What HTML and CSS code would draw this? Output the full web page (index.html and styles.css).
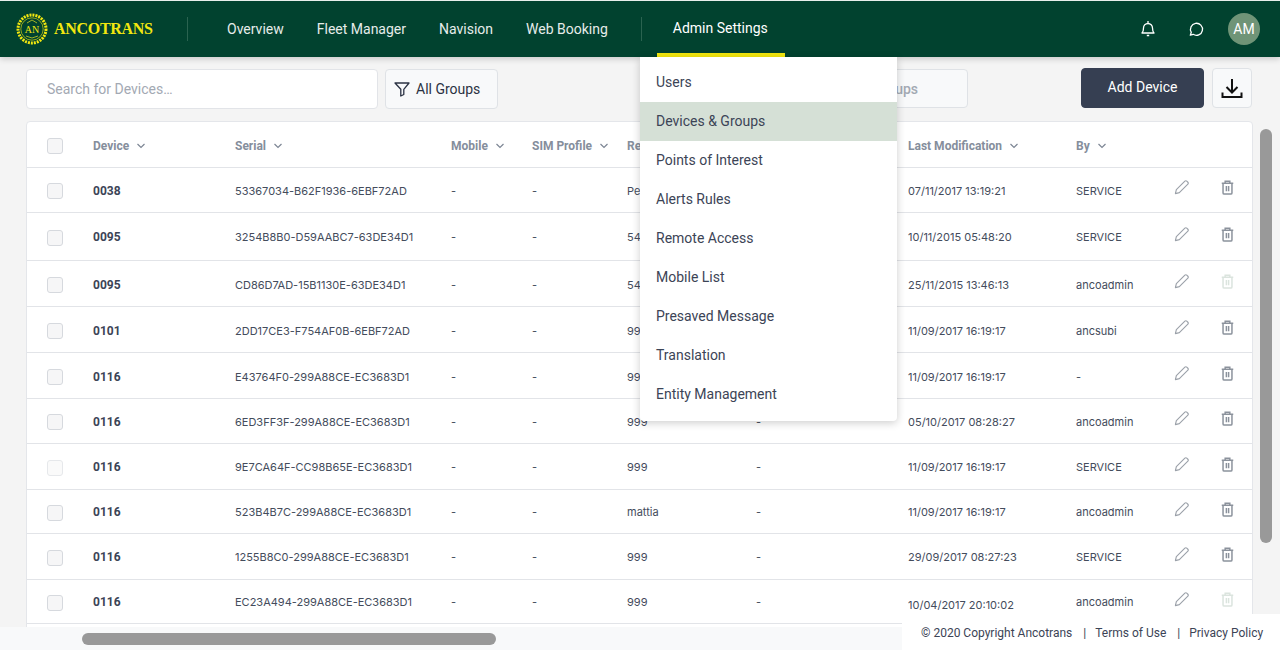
FILE: index.html
```html
<!DOCTYPE html>
<html lang="en">
<head>
  <meta charset="UTF-8">
  <meta name="viewport" content="width=device-width, initial-scale=1">
  <title>Ancotrans</title>
  <link rel="stylesheet" href="styles.css">
</head>
<body>
  <svg class="icon-defs" width="0" height="0">
    <symbol id="chevron" viewBox="0 0 10 6"><path d="M1.500 1l3.500 3.500L8.500 1" fill="none" stroke="currentColor" stroke-width="1.200"/></symbol>
    <symbol id="pencil" viewBox="0 0 16 16"><path d="M1.500 14.500l1-4.200L11.600 1.200a1.400 1.400 0 0 1 2 0l1.200 1.200a1.400 1.400 0 0 1 0 2L5.700 13.500z" fill="none" stroke="currentColor" stroke-width="1.200" stroke-linejoin="round"/></symbol>
    <symbol id="trash" viewBox="0 0 14 16"><path d="M.8 3.500h12.400M4.500 3.300V1.200h5v2.100M2.200 3.500v10.300a1.300 1.300 0 0 0 1.300 1.300h7a1.300 1.300 0 0 0 1.300-1.300V3.500M5.800 6.500v5.500M8.200 6.500v5.500" fill="none" stroke="currentColor" stroke-width="1.600"/></symbol>
  </svg>

  <!-- top bar -->
  <header class="topbar">
    <a class="brand">
      <svg class="brand-mark" viewBox="0 0 32 32" width="32" height="32">
        <circle cx="16" cy="16" r="14" fill="none" stroke="#f2e70f" stroke-width="3" stroke-dasharray="2 1"/>
        <circle cx="16" cy="16" r="11.200" fill="none" stroke="#f2e70f" stroke-width=".6"/>
        <path d="M11 10l5-3 5 3M10 23l6 2 6-2" fill="none" stroke="#c9cf25" stroke-width=".8"/>
        <text x="16" y="19.500" text-anchor="middle" class="brand-mark-text">AN</text>
      </svg>
      <span class="brand-name">ANCOTRANS</span>
    </a>
    <span class="nav-sep"></span>
    <nav class="nav">
      <a class="nav-link">Overview</a>
      <a class="nav-link">Fleet Manager</a>
      <a class="nav-link">Navision</a>
      <a class="nav-link">Web Booking</a>
    </nav>
    <span class="nav-sep nav-sep-2"></span>
    <a class="nav-link nav-link-active">Admin Settings</a>
    <div class="topbar-right">
      <svg class="top-icon" viewBox="0 0 16 18" width="16" height="18"><path d="M2 13c1.200-1.200 1.500-2.500 1.500-5a4.500 4.500 0 0 1 9 0c0 2.500.3 3.800 1.500 5zM8 1v2M6.800 15.500h2.400" fill="none" stroke="#fff" stroke-width="1.300" stroke-linejoin="round"/></svg>
      <svg class="top-icon" viewBox="0 0 16 16" width="16" height="16"><path d="M2.300 14.200l1-2.900A6 6 0 1 1 5.200 13.300z" fill="none" stroke="#fff" stroke-width="1.300" stroke-linejoin="round"/></svg>
      <span class="avatar">AM</span>
    </div>
  </header>

  <main class="content">
    <div class="toolbar">
      <input class="search" type="text" placeholder="Search for Devices…">
      <button class="btn btn-filter">
        <svg viewBox="0 0 16 16" width="16" height="16"><path d="M1 2h14L9.800 8.300V13.500l-3 1.500V8.300z" fill="none" stroke="#2b3243" stroke-width="1.300" stroke-linejoin="round"/></svg>
        All Groups
      </button>
      <button class="btn btn-ghost">ups</button>
      <button class="btn btn-primary">Add Device</button>
      <button class="btn btn-download">
        <svg viewBox="0 0 22 22" width="22" height="22"><path d="M11 2v13M5.500 10l5.500 5.500 5.500-5.500M1.500 15.500v4.500h19v-4.500" fill="none" stroke="#111" stroke-width="2"/></svg>
      </button>
    </div>

    <div class="table-card">
      <table class="devices">
        <colgroup>
          <col class="c-check"><col class="c-device"><col class="c-serial"><col class="c-mobile"><col class="c-sim">
          <col class="c-reg"><col class="c-note"><col class="c-mod"><col class="c-by"><col class="c-edit"><col class="c-del">
        </colgroup>
        <thead>
          <tr>
            <th><span class="check"></span></th>
            <th>Device <svg class="sort"><use href="#chevron"/></svg></th>
            <th>Serial <svg class="sort"><use href="#chevron"/></svg></th>
            <th>Mobile <svg class="sort"><use href="#chevron"/></svg></th>
            <th>SIM Profile <svg class="sort"><use href="#chevron"/></svg></th>
            <th>Re</th>
            <th></th>
            <th>Last Modification <svg class="sort"><use href="#chevron"/></svg></th>
            <th>By <svg class="sort"><use href="#chevron"/></svg></th>
            <th></th>
            <th></th>
          </tr>
        </thead>
        <tbody>
          <tr class="h45">
            <td><span class="check"></span></td><td class="name">0038</td><td>53367034-B62F1936-6EBF72AD</td><td>-</td><td>-</td><td>Pe</td><td></td><td>07/11/2017 13:19:21</td><td>SERVICE</td>
            <td class="act"><svg class="i-edit"><use href="#pencil"/></svg></td><td class="act"><svg class="i-del"><use href="#trash"/></svg></td>
          </tr>
          <tr class="h48 up">
            <td><span class="check"></span></td><td class="name">0095</td><td>3254B8B0-D59AABC7-63DE34D1</td><td>-</td><td>-</td><td>54</td><td></td><td>10/11/2015 05:48:20</td><td>SERVICE</td>
            <td class="act"><svg class="i-edit"><use href="#pencil"/></svg></td><td class="act"><svg class="i-del"><use href="#trash"/></svg></td>
          </tr>
          <tr class="h46">
            <td><span class="check"></span></td><td class="name">0095</td><td>CD86D7AD-15B1130E-63DE34D1</td><td>-</td><td>-</td><td>54</td><td></td><td>25/11/2015 13:46:13</td><td>ancoadmin</td>
            <td class="act"><svg class="i-edit"><use href="#pencil"/></svg></td><td class="act"><svg class="i-del off"><use href="#trash"/></svg></td>
          </tr>
          <tr class="h46">
            <td><span class="check"></span></td><td class="name">0101</td><td>2DD17CE3-F754AF0B-6EBF72AD</td><td>-</td><td>-</td><td>99</td><td></td><td>11/09/2017 16:19:17</td><td>ancsubi</td>
            <td class="act"><svg class="i-edit"><use href="#pencil"/></svg></td><td class="act"><svg class="i-del"><use href="#trash"/></svg></td>
          </tr>
          <tr class="h46">
            <td><span class="check"></span></td><td class="name">0116</td><td>E43764F0-299A88CE-EC3683D1</td><td>-</td><td>-</td><td>99</td><td></td><td>11/09/2017 16:19:17</td><td>-</td>
            <td class="act"><svg class="i-edit"><use href="#pencil"/></svg></td><td class="act"><svg class="i-del"><use href="#trash"/></svg></td>
          </tr>
          <tr class="h45">
            <td><span class="check"></span></td><td class="name">0116</td><td>6ED3FF3F-299A88CE-EC3683D1</td><td>-</td><td>-</td><td>999</td><td>-</td><td>05/10/2017 08:28:27</td><td>ancoadmin</td>
            <td class="act"><svg class="i-edit"><use href="#pencil"/></svg></td><td class="act"><svg class="i-del"><use href="#trash"/></svg></td>
          </tr>
          <tr class="h46 up">
            <td><span class="check check-light"></span></td><td class="name">0116</td><td>9E7CA64F-CC98B65E-EC3683D1</td><td>-</td><td>-</td><td>999</td><td>-</td><td>11/09/2017 16:19:17</td><td>SERVICE</td>
            <td class="act"><svg class="i-edit"><use href="#pencil"/></svg></td><td class="act"><svg class="i-del"><use href="#trash"/></svg></td>
          </tr>
          <tr class="h44 up">
            <td><span class="check"></span></td><td class="name">0116</td><td>523B4B7C-299A88CE-EC3683D1</td><td>-</td><td>-</td><td>mattia</td><td>-</td><td>11/09/2017 16:19:17</td><td>ancoadmin</td>
            <td class="act"><svg class="i-edit"><use href="#pencil"/></svg></td><td class="act"><svg class="i-del"><use href="#trash"/></svg></td>
          </tr>
          <tr class="h46 up">
            <td><span class="check"></span></td><td class="name">0116</td><td>1255B8C0-299A88CE-EC3683D1</td><td>-</td><td>-</td><td>999</td><td>-</td><td>29/09/2017 08:27:23</td><td>SERVICE</td>
            <td class="act"><svg class="i-edit"><use href="#pencil"/></svg></td><td class="act"><svg class="i-del"><use href="#trash"/></svg></td>
          </tr>
          <tr class="h44 up">
            <td><span class="check"></span></td><td class="name">0116</td><td>EC23A494-299A88CE-EC3683D1</td><td>-</td><td>-</td><td>999</td><td>-</td><td class="low">10/04/2017 20:10:02</td><td>ancoadmin</td>
            <td class="act"><svg class="i-edit"><use href="#pencil"/></svg></td><td class="act"><svg class="i-del off"><use href="#trash"/></svg></td>
          </tr>
          <tr class="h46"><td colspan="11"></td></tr>
        </tbody>
      </table>
    </div>
  </main>

  <!-- dropdown from Admin Settings -->
  <ul class="menu">
    <li>Users</li>
    <li class="menu-current">Devices &amp; Groups</li>
    <li>Points of Interest</li>
    <li>Alerts Rules</li>
    <li>Remote Access</li>
    <li>Mobile List</li>
    <li>Presaved Message</li>
    <li>Translation</li>
    <li>Entity Management</li>
  </ul>

  <div class="scroll-y"></div>
  <div class="scroll-x"><span class="scroll-x-thumb"></span></div>

  <footer class="footer">
    <span>© 2020 Copyright Ancotrans</span><i>|</i><a>Terms of Use</a><i>|</i><a>Privacy Policy</a>
  </footer>
</body>
</html>
```
FILE: styles.css
```css
/* Global */
body {
  margin: 0;
  height: 650px;
  overflow: hidden;
  position: relative;
  background-color: #f4f4f4;
  font-family: Roboto, Arial, sans-serif;
  color: #3c4456;
}
.icon-defs {
  position: absolute;
}

/* Top bar */
.topbar {
  height: 56px;
  border-top: 1px solid #e8efec;
  background-color: #01422f;
  display: flex;
  align-items: center;
  box-shadow: 0 2px 6px rgba(0, 0, 0, 0.18);
  position: relative;
}
.brand {
  display: flex;
  align-items: center;
  margin-left: 16px;
  width: 171px;
  gap: 6px;
}
.brand-mark-text {
  font-family: "Liberation Serif", serif;
  font-size: 10px;
  fill: #f2e70f;
}
.brand-name {
  font-family: "Liberation Serif", serif;
  font-weight: bold;
  font-size: 16px;
  letter-spacing: -0.3px;
  color: #f2e70f;
}
.nav-sep {
  width: 1px;
  height: 24px;
  background-color: #2a6350;
}
.nav {
  display: flex;
  gap: 33px;
  margin-left: 39px;
}
.nav-link {
  font-size: 14px;
  color: #e6ecea;
}
.nav-sep-2 {
  margin-left: 33px;
}
.nav-link-active {
  margin-left: 15px;
  width: 128px;
  height: 56px;
  line-height: 55px;
  padding: 0 16px;
  box-sizing: border-box;
  white-space: nowrap;
  color: #fff;
  border-bottom: 4px solid #f2e70f;
}
.topbar-right {
  margin-left: auto;
  margin-right: 20px;
  display: flex;
  align-items: center;
}
.top-icon {
  margin-right: 32px;
}
.top-icon + .top-icon {
  margin-right: 24px;
}
.avatar {
  width: 32px;
  height: 32px;
  border-radius: 50%;
  background-color: #6f9477;
  color: #fff;
  font-size: 14px;
  display: flex;
  align-items: center;
  justify-content: center;
}

/* Toolbar */
.content {
  height: 593px;
  box-sizing: border-box;
  overflow: hidden;
  padding: 11px 0 0 26px;
}
.toolbar {
  display: flex;
  align-items: flex-start;
  height: 42px;
  padding-right: 28px;
  margin-bottom: 11px;
}
.search {
  width: 352px;
  height: 40px;
  margin-top: 1px;
  padding: 0 20px;
  box-sizing: border-box;
  border: 1px solid #e2e4e8;
  border-radius: 4px;
  background-color: #fff;
  font-family: Roboto, Arial, sans-serif;
  font-size: 14px;
}
.search::placeholder {
  color: #a3a9b3;
  opacity: 1;
}
.btn {
  height: 40px;
  box-sizing: border-box;
  border-radius: 4px;
  border: 1px solid #dfe2e6;
  background-color: #f8f9fa;
  font-family: Roboto, Arial, sans-serif;
  font-size: 14px;
  padding: 0;
}
.btn-filter {
  margin: 1px 0 0 7px;
  width: 113px;
  padding-left: 8px;
  display: flex;
  align-items: center;
  gap: 6px;
  color: #2b3243;
}
.btn-ghost {
  margin: 1px 113px 0 auto;
  width: 178px;
  height: 39px;
  padding: 0 49px 0 0;
  text-align: right;
  font-weight: 500;
  color: #a3a9b3;
}
.btn-primary {
  width: 123px;
  padding-bottom: 2px;
  background-color: #363f52;
  border-color: #363f52;
  color: #fff;
}
.btn-download {
  width: 40px;
  margin-left: 8px;
  display: flex;
  align-items: center;
  justify-content: center;
}

/* Table */
.table-card {
  width: 1227px;
  box-sizing: border-box;
  border: 1px solid #e4e6ea;
  border-radius: 4px;
  background-color: #fff;
}
.devices {
  width: 1225px;
  table-layout: fixed;
  border-collapse: collapse;
}
.c-check { width: 66px; }
.c-device { width: 142px; }
.c-serial { width: 216px; }
.c-mobile { width: 81px; }
.c-sim { width: 95px; }
.c-reg { width: 129px; }
.c-note { width: 152px; }
.c-mod { width: 168px; }
.c-by { width: 99px; }
.c-edit { width: 46px; }
.c-del { width: 31px; }
.devices th {
  box-sizing: border-box;
  height: 45px;
  padding: 3px 0 0;
  text-align: left;
  font-size: 12px;
  font-weight: 700;
  color: #858e9c;
  white-space: nowrap;
  border-bottom: 1px solid #e2e4e8;
}
.sort {
  width: 10px;
  height: 6px;
  margin-left: 4px;
  vertical-align: 1px;
  color: #7d8694;
}
.devices td {
  box-sizing: border-box;
  padding: 3px 0 0;
  font-family: Inter, Arial, sans-serif;
  font-size: 11px;
  color: #444c5c;
  white-space: nowrap;
  border-bottom: 1px solid #e2e4e8;
}
.devices td.name {
  font-family: Roboto, Arial, sans-serif;
  font-size: 12px;
  font-weight: 700;
  color: #3c4456;
}
.h44 td { height: 44px; }
.h45 td { height: 45px; }
.h46 td { height: 46px; }
.h48 td { height: 48px; }
.devices .up td {
  padding-top: 1px;
}
.devices .up td:first-child {
  padding-top: 3px;
}
.devices td.act,
.devices .up td.act {
  padding: 0 0 4px;
}
.devices .up td.low {
  padding-top: 8px;
}
.check {
  display: block;
  width: 16px;
  height: 16px;
  margin-left: 20px;
  box-sizing: border-box;
  border: 1px solid #d6d9de;
  border-radius: 3px;
  background-color: #f6f6f7;
}
.check-light {
  border-color: #e6e8eb;
  background-color: #fafafa;
}
.i-edit {
  display: block;
  width: 15px;
  height: 15px;
  margin-left: -1px;
  color: #9ba1a9;
}
.i-del {
  display: block;
  width: 13px;
  height: 15px;
  color: #8b929c;
}
.i-del.off {
  color: #dbe4de;
}

/* Dropdown */
.menu {
  position: absolute;
  left: 640px;
  top: 57px;
  width: 257px;
  margin: 0;
  padding: 6px 0 7px;
  box-sizing: border-box;
  list-style: none;
  background-color: #fff;
  border-radius: 0 0 4px 4px;
  box-shadow: 0 2px 8px rgba(0, 0, 0, 0.2);
}
.menu li {
  height: 39px;
  line-height: 39px;
  padding-left: 16px;
  font-size: 14px;
  color: #3c4456;
}
.menu .menu-current {
  background-color: #d5e0d6;
}

/* Scrollbars */
.scroll-y {
  position: absolute;
  left: 1260px;
  top: 129px;
  width: 12px;
  height: 414px;
  border-radius: 6px;
  background-color: #999;
}
.scroll-x {
  position: absolute;
  left: 0;
  top: 627px;
  width: 902px;
  height: 23px;
  background-color: #f8f9fa;
}
.scroll-x-thumb {
  position: absolute;
  left: 82px;
  top: 6px;
  width: 414px;
  height: 12px;
  border-radius: 6px;
  background-color: #999;
}

/* Footer */
.footer {
  position: absolute;
  right: 0;
  bottom: 0;
  width: 378px;
  height: 36px;
  padding: 1px 0 0 19px;
  box-sizing: border-box;
  background-color: #fff;
  display: flex;
  align-items: center;
  font-size: 12px;
  color: #3c4456;
}
.footer i {
  font-style: normal;
  margin: 0 9px 0 11px;
}
```
